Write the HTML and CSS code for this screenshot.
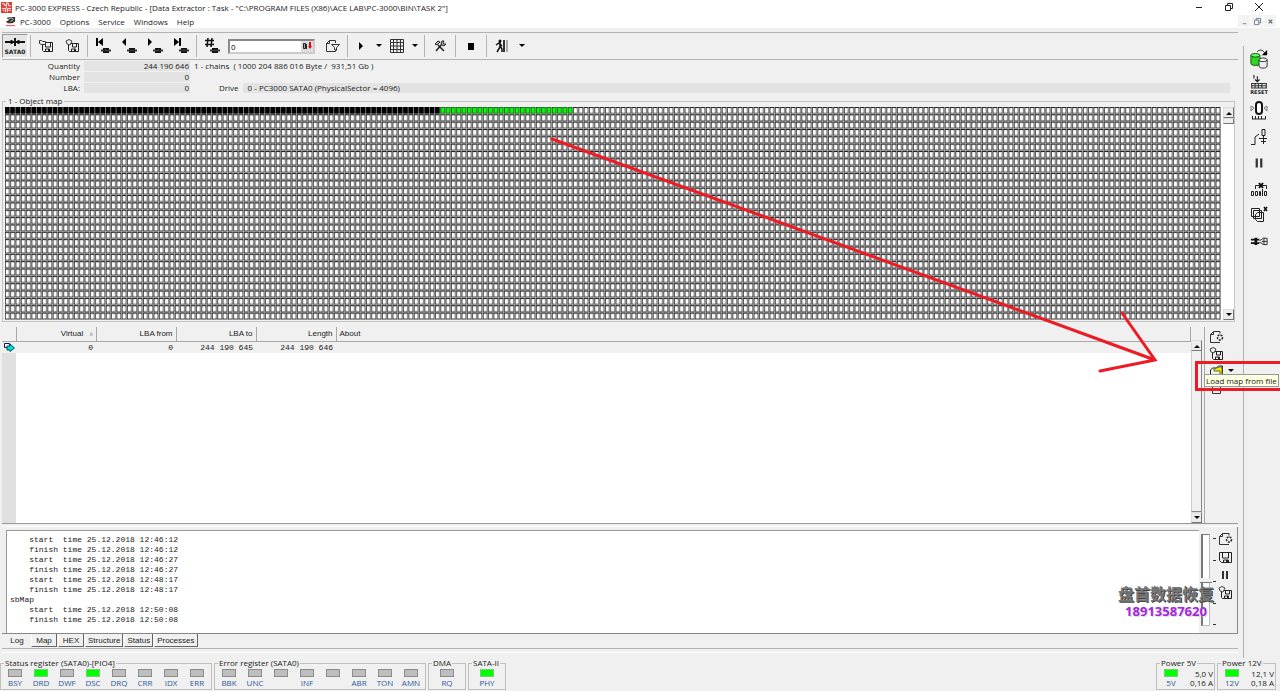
FILE: index.html
```html
<!DOCTYPE html>
<html lang="en">
<head>
<meta charset="utf-8">
<title>PC-3000 EXPRESS</title>
<link rel="stylesheet" href="styles.css">
</head>
<body>
<svg class="sprite" aria-hidden="true">
  <defs>
    <symbol id="disk" viewBox="0 0 16 16"><path d="M2.500 3.500h12v10h-10l-2-2z M5.500 4v5h6V4 M6.500 13v-2h5v2" fill="#eee" stroke="#222"/><path d="M9 11h2v2H9z" fill="#222"/></symbol>
    <symbol id="diskload" viewBox="0 0 16 16"><path d="M4.500 4.500h10v9h-9l-1-1z M7.500 5v4h5V5 M7.500 13v-2h4v2" fill="#eee" stroke="#222"/><path d="M10 11h2v2h-2z" fill="#222"/><path d="M1.500 2.500h2l1 1h3v3h-4l-2-1z" fill="#eee" stroke="#333"/></symbol>
    <symbol id="disksave" viewBox="0 0 16 16"><path d="M4.500 5.500h10v8h-9l-1-1z M8.500 6v3h4V6 M7.500 13v-2h4v2" fill="#eee" stroke="#222"/><path d="M10 11h2v2h-2z" fill="#222"/><path d="M2 3l3-1.500L8 3 6 7 3 6z" fill="#eee" stroke="#444"/></symbol>
    <symbol id="newpage" viewBox="0 0 16 16"><path d="M12 13.500H2.500v-8l3-3H12v2M2.500 5.500h3v-3" fill="none" stroke="#333"/><circle cx="12" cy="8.500" r="2.500" fill="none" stroke="#222" stroke-width="1.500" stroke-dasharray="2 1"/></symbol>
    <symbol id="chip" viewBox="0 0 10 5"><path d="M2 0h6v5H2z" fill="#111"/><path d="M0 2.500h10" stroke="#333" stroke-width="2"/></symbol>
    <symbol id="down" viewBox="0 0 6 4"><path d="M0 0h6L3 3z"/></symbol>
    <symbol id="up" viewBox="0 0 6 4"><path d="M0 4h6L3 1z"/></symbol>
    <symbol id="pause" viewBox="0 0 16 16"><path d="M5 4h2v8H5zM9 4h2v8H9z" fill="#333"/></symbol>
    <symbol id="restore" viewBox="0 0 8 8"><path d="M0.500 2.500h5v5h-5zM2.500 2.500v-2h5v5h-2" fill="none" stroke="currentColor"/></symbol>
  </defs>
</svg>
<div class="app">
  <header class="titlebar">
    <svg class="logo" viewBox="0 0 12 12"><path d="M0 0h12v12H0z" fill="#e33b32"/><path d="M1 2h3v2h2V1h2v3h3M1 7h4v4M7 11V7h4M2 9h2M8 9h3M6 5v2" fill="none" stroke="#fff"/></svg>
    <span class="title">PC-3000 EXPRESS - Czech Republic - [Data Extractor : Task - "C:\PROGRAM FILES (X86)\ACE LAB\PC-3000\BIN\TASK 2"]</span>
    <div class="winbtns">
      <button aria-label="Minimize"><svg viewBox="0 0 8 8"><path d="M1 4.500h6" stroke="#222"/></svg></button>
      <button aria-label="Restore"><svg viewBox="0 0 8 8"><use href="#restore"/></svg></button>
      <button aria-label="Close"><svg viewBox="0 0 8 8"><path d="M0 0l8 8M8 0L0 8" stroke="#222"/></svg></button>
    </div>
  </header>
  <nav class="menubar">
    <svg class="menulogo" viewBox="0 0 12 12"><path d="M2 2l4-1h5v5l-3 2H3L1 6l3-1z" fill="#333"/><path d="M3 4l4-2 2 1M6 6l3-2" stroke="#ddd" fill="none"/><path d="M1 10.500h10" stroke="#e33"/></svg>
    <button>PC-3000</button><button>Options</button><button>Service</button><button>Windows</button><button>Help</button>
    <div class="mdibtns">
      <button aria-label="Minimize task"><svg viewBox="0 0 8 8"><path d="M2 6.500h4" stroke="currentColor"/></svg></button>
      <button aria-label="Restore task"><svg viewBox="0 0 8 8"><use href="#restore"/></svg></button>
      <button aria-label="Close task"><svg viewBox="0 0 8 8"><path d="M2 2l4 4M6 2L2 6" stroke="currentColor" stroke-width="1.500"/></svg></button>
    </div>
  </nav>
  <div class="workspace">
    <main class="main">
      <div class="toolbar">
        <button class="sata"><svg viewBox="0 0 20 8"><path d="M0 4h20" stroke="#111" stroke-width="2"/><path d="M10 0v8M6.500 2v4M13.500 2v4" stroke="#111" stroke-width="2"/></svg>SATA0</button>
        <i class="sep"></i>
        <button class="tb wide" aria-label="Load"><svg class="ic"><use href="#diskload"/></svg></button>
        <button class="tb wide" aria-label="Save"><svg class="ic"><use href="#disksave"/></svg></button>
        <i class="sep"></i>
        <button class="tb wide" aria-label="First"><svg class="ic" viewBox="0 0 16 16"><path d="M1 0h2v8H1zM8 0v8L3 4z"/><use href="#chip" x="6" y="10" width="10" height="5"/></svg></button>
        <button class="tb wide" aria-label="Previous"><svg class="ic" viewBox="0 0 16 16"><path d="M5 0v8L1 4z"/><use href="#chip" x="6" y="10" width="10" height="5"/></svg></button>
        <button class="tb wide" aria-label="Next"><svg class="ic" viewBox="0 0 16 16"><path d="M1 0v8l4-4z"/><use href="#chip" x="6" y="10" width="10" height="5"/></svg></button>
        <button class="tb wide" aria-label="Last"><svg class="ic" viewBox="0 0 16 16"><path d="M1 0v8l5-4zM6 0h2v8H6z"/><use href="#chip" x="6" y="10" width="10" height="5"/></svg></button>
        <i class="sep"></i>
        <button class="tb wide" aria-label="Go to number"><svg class="ic" viewBox="0 0 16 16"><path d="M4 0L3 9M8 0L7 9M1 2.500h9M1 6.500h9" stroke="#111" stroke-width="1.500"/><use href="#chip" x="6" y="10" width="10" height="5"/></svg></button>
        <div class="number"><input aria-label="Number" value="0"><button aria-label="Decimal"><svg viewBox="0 0 10 8"><path d="M1.500 1.500h2v5h-2zM4.500 2v5" stroke="#222" fill="#aaa"/><path d="M7 0h2v4h1L8 7 6 4h1z" fill="#e00"/></svg></button></div>
        <button class="tb wide" aria-label="Filter"><svg class="ic" viewBox="0 0 16 16"><path d="M11.500 12v1.500h-9v-8l3-3h6V5M2.500 5.500h3v-3M7.500 6.500h8l-3 3v3l-2-1v-2z" fill="#eee" stroke="#333"/></svg></button>
        <i class="sep"></i>
        <button class="tb" aria-label="Start"><svg class="ic" viewBox="0 0 16 16"><path d="M6 4v8l4-4z"/></svg></button>
        <button class="drop" aria-label="Start options"><svg><use href="#down"/></svg></button>
        <button class="tb" aria-label="Map"><svg class="ic" viewBox="0 0 16 16"><path d="M1.500 1.500h13v13h-13zM4.500 1v14M8 1v14M11.500 1v14M1 4.500h14M1 8h14M1 11.500h14" fill="none" stroke="#333"/></svg></button>
        <button class="drop" aria-label="Map options"><svg><use href="#down"/></svg></button>
        <i class="sep"></i>
        <button class="tb wide" aria-label="Tools"><svg class="ic" viewBox="0 0 16 16"><path d="M4 13l6-7M6 7l6 6" stroke="#222" stroke-width="1.500"/><path d="M3 6l3-3 2 1-3 3zM9 5l1-2h2l-1 2 1 1h2l-2 2-2-1z" stroke="#222" fill="#bbb"/></svg></button>
        <i class="sep"></i>
        <button class="tb wide" aria-label="Stop"><svg class="ic" viewBox="0 0 16 16"><path d="M5 5h6v7H5z"/></svg></button>
        <i class="sep"></i>
        <button class="tb wide" aria-label="Exit"><svg class="ic" viewBox="0 0 16 16"><circle cx="6" cy="3" r="1.500"/><path d="M6 4v5l-3 5M6 8l2 3v3M2 7l3-2 3 3" stroke="#111" stroke-width="1.500" fill="none"/><path d="M9 2h2v12H9z" fill="#333"/><path d="M12 2h2v12h-2z" fill="#aaa"/></svg></button>
        <button class="drop" aria-label="Exit options"><svg><use href="#down"/></svg></button>
      </div>
      <div class="info">
        <span class="lab">Quantity</span><output class="val">244 190 646</output><span class="chains">1 - chains&nbsp; ( 1000 204 886 016 Byte /&nbsp; 931,51 Gb )</span>
        <span class="lab">Number</span><output class="val">0</output><span></span>
        <span class="lab">LBA:</span><output class="val">0</output><div class="drive"><span>Drive</span><output>0 - PC3000 SATA0 (PhysicalSector = 4096)</output></div>
      </div>
      <fieldset class="map">
        <legend>1 - Object map</legend>
        <div class="maprow">
          <svg class="cells" viewBox="0 0 3664 638" preserveAspectRatio="none">
            <defs>
              <pattern id="cell" width="16" height="22" patternUnits="userSpaceOnUse"><path d="M0 0h16v22H0z" fill="#bbb"/><path d="M0 0h14v20H0z" fill="#222"/><path d="M2 3h10v15H2z" fill="#fff"/></pattern>
              <pattern id="full" width="16" height="22" patternUnits="userSpaceOnUse"><path d="M0 0h16v22H0z" fill="#aaa"/><path d="M0 0h14v20H0z"/></pattern>
              <pattern id="work" width="16" height="22" patternUnits="userSpaceOnUse"><path d="M0 0h16v22H0z" fill="#aaa"/><path d="M0 0h14v20H0z" fill="#165016"/><path d="M2 2h10v16H2z" fill="#0f0"/></pattern>
            </defs>
            <path d="M0 0h3664v638H0z" fill="url(#cell)"/><path d="M0 0h1312v22H0z" fill="url(#full)"/><path d="M1312 0h400v22h-400z" fill="url(#work)"/>
          </svg>
          <div class="scroll"><button aria-label="Map up"><svg><use href="#up"/></svg></button><i class="thumb"></i><span class="trough"></span><button aria-label="Map down"><svg><use href="#down"/></svg></button></div>
        </div>
      </fieldset>
      <section class="chainbox">
        <div class="gridbox">
          <table class="chains-table">
            <colgroup><col class="c-mark"><col class="c-num"><col class="c-num"><col class="c-num"><col class="c-num"><col></colgroup>
            <thead><tr><th></th><th>Virtual <span class="sort">∧</span></th><th>LBA from</th><th>LBA to</th><th>Length</th><th class="about">About</th></tr></thead>
            <tbody><tr><td class="mark"><svg viewBox="0 0 12 10"><path d="M1.500 1.500h5v4h-5z" fill="#fff" stroke="#115"/><path d="M4 4h3V2l4.500 4L7 9.500V8H4z" fill="#0dd" stroke="#055"/></svg></td><td>0</td><td>0</td><td>244 190 645</td><td>244 190 646</td><td></td></tr></tbody>
          </table>
          <div class="gutter"></div>
        </div>
        <div class="scroll tablescroll"><button aria-label="Table up"><svg><use href="#up"/></svg></button><span class="trough gray"></span><button aria-label="Table down"><svg><use href="#down"/></svg></button></div>
        <div class="sidetools">
          <button aria-label="New map"><svg class="ic"><use href="#newpage"/></svg></button>
          <button aria-label="Save map"><svg class="ic"><use href="#disksave"/></svg></button>
          <div class="loadrow">
            <button aria-label="Load map from file"><svg class="ic" viewBox="0 0 16 16"><path d="M2.500 14V7l2-2h4l2-2h4v11z" fill="#eee" stroke="#222"/><path d="M6 6l5-2h3v9h-2V8H6z" fill="#ee0" stroke="#663"/></svg></button><button class="drop" aria-label="Load options"><svg><use href="#down"/></svg></button>
            <div class="callout"><span role="tooltip">Load map from file</span></div>
          </div>
          <button aria-label="Page"><svg class="ic" viewBox="0 0 16 16"><path d="M4.500 3.500h8v10h-8z" fill="none" stroke="#333"/></svg></button>
        </div>
      </section>
      <section class="logbox">
        <div class="logmain">
          <pre class="log">    start  time 25.12.2018 12:46:12
    finish time 25.12.2018 12:46:12
    start  time 25.12.2018 12:46:27
    finish time 25.12.2018 12:46:27
    start  time 25.12.2018 12:48:17
    finish time 25.12.2018 12:48:17
sbMap
    start  time 25.12.2018 12:50:08
    finish time 25.12.2018 12:50:08</pre>
          <input class="level" type="range" min="0" max="100" value="50" aria-label="Log level">
          <div class="ticks"><i></i><i></i><i></i><i></i><i></i></div>
          <div class="logtools">
            <button aria-label="Clear log"><svg class="ic"><use href="#newpage"/></svg></button>
            <button aria-label="Save log"><svg class="ic"><use href="#disk"/></svg></button>
            <button aria-label="Pause log"><svg class="ic"><use href="#pause"/></svg></button>
            <button aria-label="Log to file"><svg class="ic"><use href="#disksave"/></svg></button>
          </div>
          <div class="watermark"><span class="wm-name">盘首数据恢复</span><span class="wm-phone">18913587620</span></div>
        </div>
        <div class="tabs"><button class="on">Log</button><button>Map</button><button>HEX</button><button>Structure</button><button>Status</button><button>Processes</button></div>
      </section>
      <div class="rule"></div>
    </main>
    <aside class="rail">
      <button aria-label="Copy disk"><svg viewBox="0 0 20 22"><path d="M1 7v9c0 3 10 3 10 0V7z" fill="#2fd81f" stroke="#141"/><ellipse cx="6" cy="7" rx="5" ry="2" fill="#6f6" stroke="#141"/><path d="M10 12v7c0 3 9 3 9 0v-7z" fill="#eee" stroke="#222"/><ellipse cx="14.500" cy="12" rx="4.500" ry="2" fill="#fff" stroke="#222"/><path d="M8 3c3-3 6-2 8 1" fill="none" stroke="#111"/><path d="M19 1v6h-6z"/></svg></button>
      <button aria-label="Reset"><svg viewBox="0 0 16 12"><path d="M3.500 0v3M6.500 1v5M4.500 4l2 2 2-2" stroke="#222" fill="none"/><path d="M1.500 7.500h13v4h-13zM1 9.500h14M4.500 7v4M7.500 7v4M10.500 7v4" stroke="#333" fill="none"/></svg><span>RESET</span></button>
      <button aria-label="Reset to zero"><svg viewBox="0 0 18 20"><rect x="6" y="1" width="6" height="12" rx="3" fill="#fff" stroke="#111" stroke-width="2"/><path d="M1 5l3 2-3 3zM17 5l-3 2 3 3z" fill="none" stroke="#777"/><path d="M2 18h14M2.500 15v3M5.500 15v3M8.500 15v3M11.500 15v3M15.500 15v3" stroke="#222"/></svg></button>
      <button aria-label="Power contact"><svg viewBox="0 0 18 18"><path d="M1 16.500h4V9l4-3M13.500 7v9M9 10.500h8M11 13.500h5" fill="none" stroke="#222"/><path d="M12 1.500h3v6h-3z" fill="#eee" stroke="#222"/></svg></button>
      <button aria-label="Pause"><svg viewBox="0 0 16 16"><use href="#pause"/></svg></button>
      <button aria-label="Registers"><svg viewBox="0 0 18 16"><path d="M1.500 10.500h2v4h-2zM5.500 10.500h2v4h-2zM9.500 10.500h1v4h-1zM12.500 8v7M14.500 10.500h2v4h-2zM5.500 8V4.500h11V8" fill="none" stroke="#222"/><path d="M9 2l4 5M13 2L9 7" stroke="#111" stroke-width="2"/></svg></button>
      <button aria-label="Close copies"><svg viewBox="0 0 18 18"><path d="M1.500 2.500h8v8h-8zM3.500 4.500h8v8h-8zM5.500 8.500l2-2h6v9h-6l-2-2z" fill="#eee" stroke="#222"/><path d="M14 1l3 4M17 1l-3 4" stroke="#111" stroke-width="1.500"/></svg></button>
      <button aria-label="Connector"><svg viewBox="0 0 20 12"><path d="M1 3h9v2H1zM1 7h9v2H1zM5 2h3v8H5z" fill="#111"/><path d="M10 4.500h2l3-2h4v7h-4l-3-2h-2M13 6h6M15.500 2v8" fill="none" stroke="#222"/></svg></button>
    </aside>
  </div>
  <footer class="status">
    <fieldset class="leds"><legend>Status register (SATA0)-[PIO4]</legend><span><i></i>BSY</span><span><i class="lit"></i>DRD</span><span><i></i>DWF</span><span><i class="lit"></i>DSC</span><span><i></i>DRQ</span><span><i></i>CRR</span><span><i></i>IDX</span><span><i></i>ERR</span></fieldset>
    <fieldset class="leds"><legend>Error register (SATA0)</legend><span><i></i>BBK</span><span><i></i>UNC</span><span><i></i></span><span><i></i>INF</span><span><i></i></span><span><i></i>ABR</span><span><i></i>TON</span><span><i></i>AMN</span></fieldset>
    <fieldset class="leds one"><legend>DMA</legend><span><i></i>RQ</span></fieldset>
    <fieldset class="leds one"><legend>SATA-II</legend><span><i class="lit"></i>PHY</span></fieldset>
    <fieldset class="leds power first"><legend>Power 5V</legend><span><i class="lit"></i>5V</span><b>5,0 V<br>0,16 A</b></fieldset>
    <fieldset class="leds power"><legend>Power 12V</legend><span><i class="lit"></i>12V</span><b>12,1 V<br>0,18 A</b></fieldset>
  </footer>
  <svg class="arrow" viewBox="0 0 1280 691" preserveAspectRatio="none" aria-hidden="true"><path d="M552 139L1155 360M1122 313L1155 360L1100 371" fill="none" stroke="#ed1c24" stroke-width="3" stroke-linecap="round"/></svg>
</div>
</body>
</html>
```
FILE: styles.css
```css
* { box-sizing: border-box; }
body { margin: 0; background: #f0f0f0; color: #222; font: 8px/11px "Open Sans", "Noto Sans", sans-serif; }
button { border: 0; padding: 0; background: none; color: inherit; font: inherit; display: flex; align-items: center; justify-content: center; }
svg { display: block; }
fieldset { margin: 0; min-width: 0; }
.sprite { position: absolute; width: 0; height: 0; }
.app { position: relative; display: flex; flex-direction: column; min-height: 100vh; overflow: hidden; }

.titlebar { display: flex; align-items: center; height: 14px; background: #fff; padding-left: 1px; gap: 3px; }
.logo { width: 11px; height: 11px; }
.title { flex: 1; white-space: nowrap; }
.winbtns { display: flex; gap: 22px; padding-right: 17px; }
.winbtns svg { width: 8px; height: 8px; }
.menubar { display: flex; align-items: center; gap: 9px; height: 14px; background: #fff; padding-left: 5px; }
.menulogo { width: 11px; height: 11px; margin-right: -5px; }
.mdibtns { display: flex; gap: 1px; margin-left: auto; padding-right: 4px; color: #678; }
.mdibtns button { width: 12px; height: 12px; background: #f3f3f3; }
.mdibtns svg { width: 7px; height: 7px; }

.workspace { flex: 1; display: flex; padding-top: 4px; }
.main { flex: 1; min-width: 0; display: flex; flex-direction: column; }
.toolbar { display: flex; align-items: center; height: 28px; margin: 0 5px 0 2px; border-top: 1px solid #b4b4b4; border-bottom: 1px solid #b4b4b4; }
.sata { flex-direction: column; width: 26px; height: 24px; gap: 2px; background: #e6e6e6; border: 1px solid #999; border-right-color: #fff; border-bottom-color: #fff; font: bold 6px/7px "DejaVu Sans", sans-serif; }
.sata svg { width: 20px; height: 8px; }
.sep { width: 1px; height: 22px; margin: 0 2px; background: #b4b4b4; }
.tb { width: 22px; height: 24px; }
.tb.wide { width: 26px; }
.ic { width: 16px; height: 16px; }
.drop { width: 14px; height: 16px; }
.drop svg, .scroll svg { width: 6px; height: 4px; }
.number { display: flex; width: 87px; height: 15px; margin: 0 4px 0 3px; background: #fff; border: 2px solid #888; border-right-color: #ccc; border-bottom-color: #ccc; }
.number input { flex: 1; min-width: 0; border: 0; padding: 0 1px; background: none; font: inherit; }
.number button { width: 12px; background: #ddd; }
.number svg { width: 10px; height: 8px; }

.info { display: grid; grid-template-columns: 80px 106px 1fr; column-gap: 4px; row-gap: 1px; padding: 1px 13px 0 0; line-height: 10px; }
.lab { text-align: right; }
.val { background: #e3e3e3; text-align: right; padding-right: 1px; }
.drive { display: flex; padding-left: 25px; gap: 4px; }
.drive output { flex: 1; background: #e3e3e3; padding-left: 5px; }

.map { margin: 3px 8px 0 2px; padding: 1px 0 1px 2px; border: 1px solid #c4c4c4; }
.map legend { padding: 0 2px; margin-left: 1px; line-height: 10px; }
.maprow { display: flex; background: #fff; }
.cells { flex: 1; min-width: 0; height: 213px; }
.scroll { display: flex; flex-direction: column; width: 11px; margin-left: 2px; background: #fff; }
.scroll button { height: 11px; background: #ececec; border: 1px solid #ddd; border-right-color: #777; border-bottom-color: #777; }
.thumb { height: 6px; background: #f0f0f0; border: 1px solid #ddd; border-right-color: #777; border-bottom-color: #777; }
.trough { flex: 1; }
.trough.gray { background: #f0f0f0; border-right: 1px solid #888; border-left: 1px solid #ccc; border-bottom: 1px solid #888; }

.chainbox { flex: 1; display: flex; margin: 5px 5px 0 2px; border-bottom: 1px solid #999; }
.gridbox { flex: 1; min-width: 0; display: flex; flex-direction: column; background: #fff; }
.chains-table { width: 100%; border-collapse: collapse; table-layout: fixed; font-family: "Liberation Sans", sans-serif; }
.c-mark { width: 14px; }
.c-num { width: 80px; }
.chains-table th { height: 14px; padding: 0 3px; text-align: right; font-weight: normal; background: #f0f0f0; border-right: 1px solid #a8a8a8; border-bottom: 1px solid #a8a8a8; }
.chains-table th.about { text-align: left; }
.chains-table td { height: 12px; padding: 0 3px; text-align: right; background: #f0f0f0; font-family: "Liberation Mono", monospace; }
.chains-table td.mark { padding: 0 1px; }
.mark svg { width: 12px; height: 10px; }
.sort { color: #888; font-size: 6px; margin-left: 3px; }
.gutter { flex: 1; width: 14px; background: #e0e0e0; }
.tablescroll { margin: 13px 2px 0 0; }
.sidetools { width: 34px; padding-top: 1px; border-left: 1px solid #a8a8a8; padding-left: 3px; }
.sidetools button { height: 17px; }
.loadrow { position: relative; display: flex; }
.callout { position: absolute; left: -13px; top: -1px; width: 88px; height: 30px; border: 3px solid #ed1c24; z-index: 2; padding: 10px 0 0 6px; }
.callout span { display: block; width: max-content; padding: 0 1px; background: #ffffe1; border: 1px solid #999; white-space: nowrap; line-height: 11px; }

.logbox { margin: 2px 5px 1px 2px; border-top: 1px solid #fff; }
.logmain { position: relative; display: flex; height: 107px; padding: 3px 0 0 4px; border-right: 1px solid #888; border-bottom: 1px solid #888; }
.log { flex: 1; margin: 0; padding: 4px 3px; background: #fff; border-top: 1px solid #999; border-left: 1px solid #999; font: 8px/10px "Liberation Mono", monospace; }
.level { appearance: none; writing-mode: vertical-lr; width: 9px; height: 92px; margin: 4px 0 0 2px; background: #fff; border: 1px solid #bbb; border-left: 2px solid #777; border-top-color: #777; }
.level::-webkit-slider-thumb { appearance: none; width: 12px; height: 5px; background: #f0f0f0; border-bottom: 1px solid #777; }
.ticks { display: flex; flex-direction: column; justify-content: space-between; width: 6px; padding: 8px 0 8px 3px; }
.ticks i { width: 3px; height: 1px; background: #333; }
.logtools { display: flex; flex-direction: column; gap: 2px; width: 21px; padding: 1px 4px 0 0; }
.logtools .ic { width: 16px; height: 16px; }
.watermark { position: absolute; right: 23px; top: 56px; display: flex; flex-direction: column; align-items: center; }
.wm-name { color: #777; font: bold 16px/20px "Noto Sans CJK SC", sans-serif; text-shadow: 1px 1px 0 #444; }
.wm-phone { color: #a427df; font: bold 13px/16px "Open Sans", sans-serif; text-shadow: 1px 1px 0 #ddd; }
.tabs { display: flex; gap: 1px; font-family: "Liberation Sans", sans-serif; padding-left: 2px; }
.tabs button { min-width: 26px; height: 13px; padding: 0 2px; border: 1px solid #666; border-top: 0; border-left-color: #fff; }
.tabs .on { border-color: transparent; }
.rule { height: 5px; margin: 0 5px 5px 2px; border-top: 1px solid #b4b4b4; border-bottom: 1px solid #fff; }

.rail { width: 37px; margin: 14px 0 0; padding: 0 6px 0 0; border-left: 1px solid #b0b0b0; display: flex; flex-direction: column; align-items: center; }
.rail button { height: 26px; flex-direction: column; font: bold 5px/6px "DejaVu Sans", sans-serif; }
.rail svg { width: 18px; max-height: 20px; }

.status { display: flex; gap: 2px; height: 33px; padding-right: 4px; }
.leds { display: flex; padding: 0 1px; border: 1px solid #c0c0c0; height: 32px; }
.leds legend { padding: 0 1px; margin-left: 2px; line-height: 10px; }
.leds span { width: 26px; display: flex; flex-direction: column; align-items: center; color: #2c5a9c; line-height: 9px; padding-top: 1px; gap: 1px; }
.leds i { width: 14px; height: 8px; background: #bebebe; border: 1px solid #8c8c8c; }
.leds i.lit { background: #0f0; border-color: #7c7; }
.leds.one { width: 38px; justify-content: center; }
.leds.power { width: 59px; justify-content: space-between; }
.leds.power.first { margin-left: auto; }
.leds b { font-weight: normal; text-align: right; line-height: 9px; padding-top: 1px; }
.arrow { position: absolute; inset: 0; width: 100%; height: 100%; pointer-events: none; }
```
